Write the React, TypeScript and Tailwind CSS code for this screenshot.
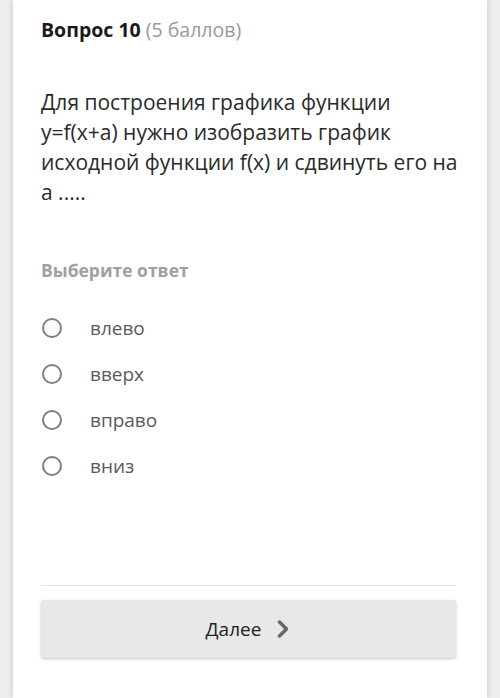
import { ChevronRight } from 'lucide-react';

const options = ['влево', 'вверх', 'вправо', 'вниз'];

export default function App() {
  return (
    <div
      className="flex h-[698px] w-[500px] justify-center overflow-hidden bg-[#eeeeee]"
      style={{ fontFamily: '"Open Sans", "Noto Sans", sans-serif' }}
    >
      <div className="flex w-[474px] flex-col bg-white pl-[28px] pr-[31px] shadow-[0_0_6px_rgba(0,0,0,0.18)]">
        <div className="pt-[16px] text-[19.5px] leading-[28px]">
          <span className="font-bold text-[#1a1a1a]">Вопрос 10</span>{' '}
          <span className="text-[#9a9a9a]">(5 баллов)</span>
        </div>

        <p className="mt-[43px] -mr-[8px] text-[21px] leading-[30px] text-[#2a2a2a]">
          Для построения графика функции y=f(x+a) нужно изобразить график исходной функции f(x) и сдвинуть его на a .....
        </p>

        <div className="mt-[52px] text-[17.5px] font-bold leading-[22px] text-[#a0a0a0]">
          Выберите ответ
        </div>

        <div className="mt-[35px] flex flex-col gap-[22px]">
          {options.map((o) => (
            <label key={o} className="flex h-[24px] items-center">
              <span className="ml-[1px] h-[20px] w-[20px] rounded-full border-[2.5px] border-[#808080]" />
              <span className="ml-[28px] text-[19px] text-[#5a5a5a]">{o}</span>
            </label>
          ))}
        </div>

        <div className="mt-auto border-t border-[#e2e2e2]" />

        <button className="mt-[14px] mb-[40px] flex h-[58px] items-center justify-center rounded-[3px] bg-[#e8e8e8] pl-[6px] shadow-[0_1px_3px_rgba(0,0,0,0.22)]">
          <span className="text-[19px] text-[#222]">Далее</span>
          <ChevronRight className="ml-[8px] h-[28px] w-[28px] text-[#666]" strokeWidth={3} />
        </button>
      </div>
    </div>
  );
}
